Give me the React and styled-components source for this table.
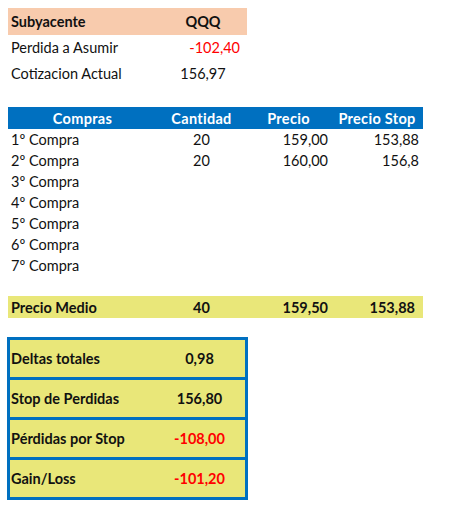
import { Fragment } from "react";
import styled, { createGlobalStyle } from "styled-components";

const GlobalStyle = createGlobalStyle`
  body {
    margin: 0;
    background: #ffffff;
    font-family: Lato, "Liberation Sans", sans-serif;
    font-size: 14.5px;
    color: #111111;
  }
`;

const Sheet = styled.div`
  padding: 8px;
  display: flex;
  flex-direction: column;
  align-items: flex-start;
`;

const TopTable = styled.div`
  display: grid;
  grid-template-columns: 152px 87px;
  grid-template-rows: 27px 25px 26px;
`;

const BuyTable = styled.div`
  margin-top: 21px;
  display: grid;
  grid-template-columns: 150px 88px 86px 91px;
  grid-template-rows: 22px;
  grid-auto-rows: 21px;
`;

const Cell = styled.div`
  display: flex;
  align-items: center;
  justify-content: ${(p) =>
    p.$align === "right" ? "flex-end" : p.$align === "center" ? "center" : "flex-start"};
  padding: 0 ${(p) => p.$pad ?? 4}px 0 ${(p) => p.$left ?? 3}px;
  font-weight: ${(p) => (p.$bold ? 700 : 400)};
  color: ${(p) => (p.$red ? "#ff0000" : "inherit")};
  background: ${(p) => p.$bg || "transparent"};
  white-space: nowrap;
`;

const HeadCell = styled(Cell)`
  background: #0070c0;
  color: #ffffff;
  font-weight: 700;
  letter-spacing: 0.3px;
`;

const AvgRow = styled.div`
  margin-top: 20px;
  display: grid;
  grid-template-columns: 150px 88px 86px 91px;
  height: 22px;
  background: #e9e779;
`;

const TotalsBox = styled.div`
  margin-top: 19px;
  margin-left: -1px;
  border: 3px solid #0070c0;
  width: 235px;
  display: flex;
  flex-direction: column;
  gap: 3px;
  background: #0070c0;
`;

const TotalRow = styled.div`
  display: grid;
  grid-template-columns: 145px 90px;
  height: 37px;
  background: #e9e779;
`;

const purchases = [
  ["1º Compra", "20", "159,00", "153,88"],
  ["2º Compra", "20", "160,00", "156,8"],
  ["3º Compra", "", "", ""],
  ["4º Compra", "", "", ""],
  ["5º Compra", "", "", ""],
  ["6º Compra", "", "", ""],
  ["7º Compra", "", "", ""],
];

const totals = [
  ["Deltas totales", "0,98", false],
  ["Stop de Perdidas", "156,80", false],
  ["Pérdidas por Stop", "-108,00", true],
  ["Gain/Loss", "-101,20", true],
];

export default function App() {
  return (
    <>
      <GlobalStyle />
      <Sheet>
        <TopTable>
          <Cell $bold $bg="#f8cbad">Subyacente</Cell>
          <Cell $bold $align="center" $bg="#f8cbad">QQQ</Cell>
          <Cell>Perdida a Asumir</Cell>
          <Cell $align="right" $red $pad={7}>-102,40</Cell>
          <Cell>Cotizacion Actual</Cell>
          <Cell $align="center">156,97</Cell>
        </TopTable>

        <BuyTable>
          <HeadCell $align="center">Compras</HeadCell>
          <HeadCell $align="center">Cantidad</HeadCell>
          <HeadCell $align="center">Precio</HeadCell>
          <HeadCell $align="center">Precio Stop</HeadCell>
          {purchases.map((row) => (
            <Fragment key={row[0]}>
              <Cell>{row[0]}</Cell>
              <Cell $align="center">{row[1]}</Cell>
              <Cell $align="right">{row[2]}</Cell>
              <Cell $align="right">{row[3]}</Cell>
            </Fragment>
          ))}
        </BuyTable>

        <AvgRow>
          <Cell $bold>Precio Medio</Cell>
          <Cell $bold $align="center">40</Cell>
          <Cell $bold $align="right">159,50</Cell>
          <Cell $bold $align="right" $pad={8}>153,88</Cell>
        </AvgRow>

        <TotalsBox>
          {totals.map(([label, value, red]) => (
            <TotalRow key={label}>
              <Cell $bold $left={1}>{label}</Cell>
              <Cell $bold $align="center" $red={red}>{value}</Cell>
            </TotalRow>
          ))}
        </TotalsBox>
      </Sheet>
    </>
  );
}
